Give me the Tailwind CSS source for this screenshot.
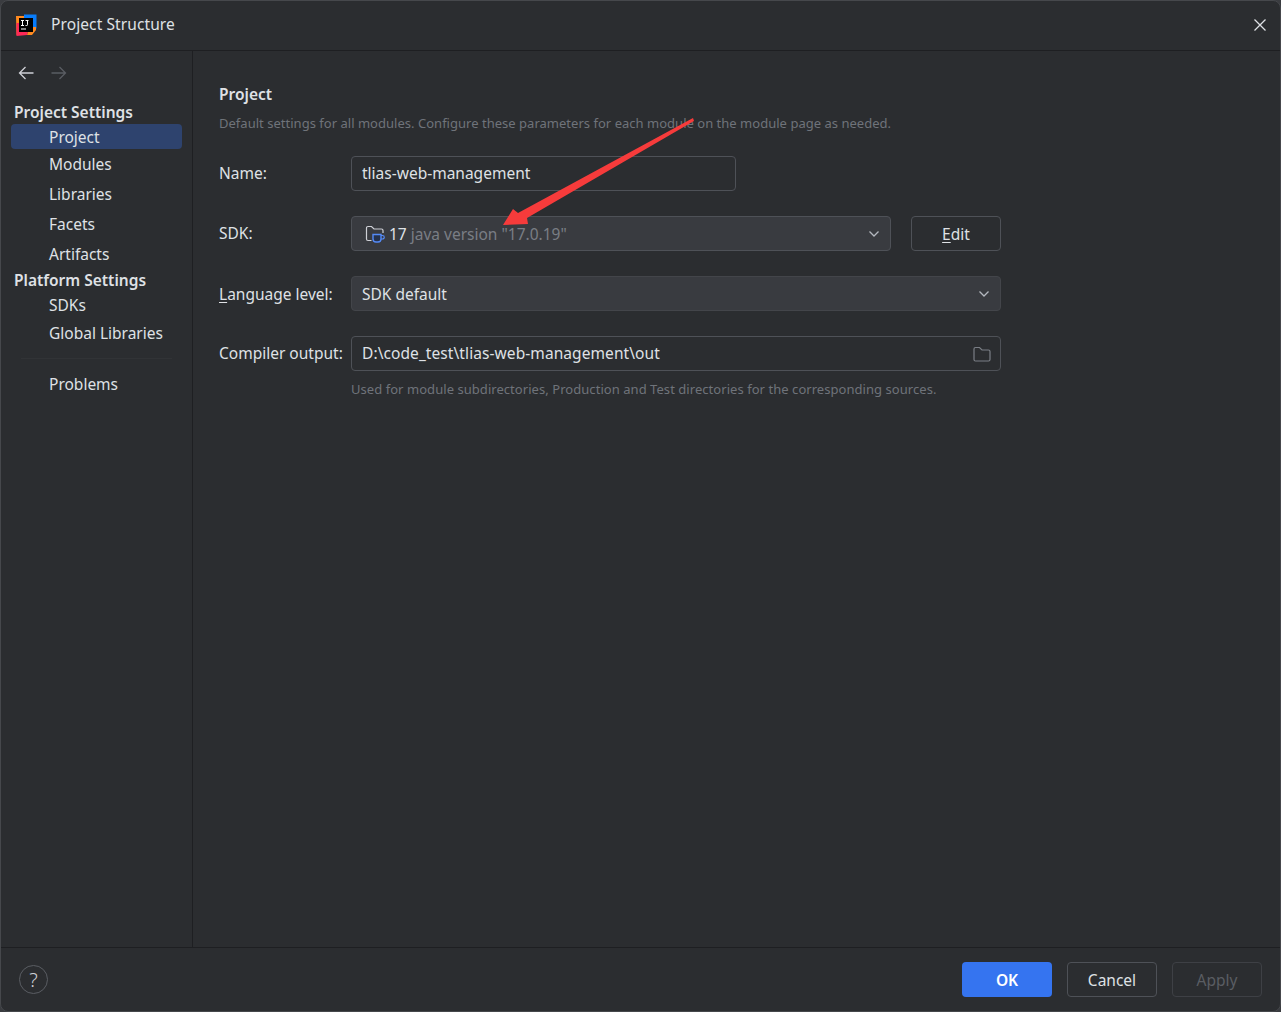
<!DOCTYPE html>
<html lang="en">
<head>
 <meta charset="UTF-8">
 <title>Project Structure</title>
 <script src="https://cdn.jsdelivr.net/npm/@tailwindcss/browser@4"></script>
</head>
<body class="bg-[#3a3c40] font-['Noto_Sans','Open_Sans',sans-serif] text-[15.5px] text-[#dfe1e5] overflow-hidden">
 <div class="relative w-[1281px] h-[1012px] flex flex-col bg-[#2b2d30] rounded-[8px] border border-[#46484c] overflow-hidden">

   <!-- title bar -->
   <div class="h-[50px] shrink-0 flex items-center border-b border-[#1e1f22] pl-[14px] pr-[13px]">
     <svg class="w-[22px] h-[22px] -mt-[2px]" viewBox="0 0 22 22">
       <path d="M1 2h9v5H6v8l-2 5-2.500 1z" fill="#ff8a1f"/>
       <path d="M9 .5h12.500v14l-3.500 1V6H9z" fill="#087cfa"/>
       <path d="M1.500 9h3.500v9h8l-1 3-10.500 1z" fill="#fe2857"/>
       <path d="M17 13h4v3l-4 5h-5l1-3h4z" fill="#ff8a1f"/>
       <rect x="4" y="4" width="14" height="14" fill="#000"/>
       <path d="M6 6.500h3M7.500 6.500v5M6 11.500h3M10.500 6.500h3M12.500 6.500v4.200q0 .8-.8.8h-1.200" stroke="#fff" stroke-width="1" fill="none"/>
       <rect x="6" y="14.500" width="5" height="1" fill="#fff"/>
     </svg>
     <span class="ml-[14px] -mt-[2px] tracking-[.1px] text-[#dfe1e5]">Project Structure</span>
     <svg class="ml-auto w-[14px] h-[14px] -mt-[2px]" viewBox="0 0 14 14"><path d="M1.500 1.500l11 11M12.500 1.500l-11 11" stroke="#dfe1e5" stroke-width="1.300"/></svg>
   </div>

   <div class="flex flex-1 min-h-0">
     <!-- sidebar -->
     <aside class="w-[192px] shrink-0 border-r border-[#1e1f22] pt-[12px]">
       <div class="flex items-center gap-[17px] pl-[17px] h-[20px]">
         <svg class="w-[16px] h-[16px]" viewBox="0 0 16 16"><path d="M15.500 8H1.500M7.500 2l-6 6 6 6" stroke="#ced0d6" stroke-width="1.300" fill="none"/></svg>
         <svg class="w-[16px] h-[16px]" viewBox="0 0 16 16"><path d="M.5 8h14M8.500 2l6 6-6 6" stroke="#5a5d63" stroke-width="1.300" fill="none"/></svg>
       </div>
       <div class="mt-[19px] pl-[13px] pt-[2px] h-[20px] flex items-center font-semibold text-[#dfe1e5]">Project Settings</div>
       <div class="mt-[2px] mx-[10px] w-[171px] h-[25px] rounded-[4px] bg-[#2e436e] pl-[38px] pt-[2px] flex items-center">Project</div>
       <div class="pl-[48px] pt-[2px] mt-[3px] h-[24px] flex items-center">Modules</div>
       <div class="pl-[48px] pt-[2px] mt-[6px] h-[24px] flex items-center">Libraries</div>
       <div class="pl-[48px] pt-[2px] mt-[6px] h-[24px] flex items-center">Facets</div>
       <div class="pl-[48px] pt-[2px] mt-[6px] h-[24px] flex items-center">Artifacts</div>
       <div class="pl-[13px] pt-[2px] mt-[2px] h-[24px] flex items-center font-semibold">Platform Settings</div>
       <div class="pl-[48px] pt-[2px] mt-[1px] h-[24px] flex items-center">SDKs</div>
       <div class="pl-[48px] pt-[2px] mt-[4px] h-[24px] flex items-center">Global Libraries</div>
       <div class="mx-[20px] mt-[13px] h-px bg-[#313336]"></div>
       <div class="pl-[48px] pt-[2px] mt-[13px] h-[24px] flex items-center">Problems</div>
     </aside>

     <!-- content -->
     <main class="flex-1 pl-[26px] pt-[33px]">
       <div class="h-[20px] pt-[2px] flex items-center font-semibold">Project</div>
       <div class="mt-[10px] h-[20px] flex items-center text-[13px] tracking-[.02px] text-[#6f737a]">Default settings for all modules. Configure these parameters for each module on the module page as needed.</div>

       <div class="mt-[22px] flex items-center h-[35px]">
         <label class="w-[132px] shrink-0">Name:</label>
         <div class="w-[385px] h-[35px] rounded-[4px] border border-[#4e5157] px-[10px] flex items-center">tlias-web-management</div>
       </div>

       <div class="mt-[25px] flex items-center h-[35px]">
         <label class="w-[132px] shrink-0">SDK:</label>
         <div class="w-[540px] h-[35px] rounded-[4px] border border-[#4e5157] bg-[#393b40] pl-[13px] pr-[10px] flex items-center">
           <svg class="w-[20px] h-[20px] shrink-0" viewBox="0 0 20 20" fill="none">
             <path d="M6.500 16.500H3a1.500 1.500 0 0 1-1.500-1.500V4A1.500 1.500 0 0 1 3 2.500h3.500L9 5h7.500A1.500 1.500 0 0 1 18 6.500V9" stroke="#ced0d6" stroke-width="1.200"/>
             <path d="M8 10.500h8v4.500a3 3 0 0 1-3 3h-2a3 3 0 0 1-3-3z" fill="#25324d" stroke="#548af7" stroke-width="1.400"/>
             <path d="M16 11.500h1.500a1.500 1.500 0 0 1 0 3.500H16" stroke="#548af7" stroke-width="1.200"/>
           </svg>
           <span class="ml-[4px] mt-[2px]">17</span>
           <span class="ml-[4px] mt-[2px] text-[#7a7e85]">java version "17.0.19"</span>
           <svg class="ml-auto w-[12px] h-[12px]" viewBox="0 0 12 12" fill="none"><path d="M1.500 3.500L6 8l4.500-4.500" stroke="#b4b8bf" stroke-width="1.300"/></svg>
         </div>
         <button class="ml-[20px] w-[90px] h-[35px] pt-[2px] rounded-[4px] border border-[#4e5157] flex items-center justify-center"><span><span class="underline underline-offset-2">E</span>dit</span></button>
       </div>

       <div class="mt-[25px] flex items-center h-[35px]">
         <label class="w-[132px] pt-[2px] shrink-0"><span class="underline underline-offset-2">L</span>anguage level:</label>
         <div class="w-[650px] h-[35px] rounded-[4px] border border-[#43454a] bg-[#393b40] pl-[10px] pr-[10px] flex items-center">
           <span class="mt-[2px]">SDK default</span>
           <svg class="ml-auto w-[12px] h-[12px]" viewBox="0 0 12 12" fill="none"><path d="M1.500 3.500L6 8l4.500-4.500" stroke="#b4b8bf" stroke-width="1.300"/></svg>
         </div>
       </div>

       <div class="mt-[25px] flex items-center h-[35px]">
         <label class="w-[132px] shrink-0">Compiler output:</label>
         <div class="w-[650px] h-[35px] rounded-[4px] border border-[#4e5157] pl-[10px] pr-[9px] flex items-center">
           <span class="tracking-[.08px]">D:\code_test\tlias-web-management\out</span>
           <svg class="ml-auto w-[18px] h-[16px]" viewBox="0 0 18 16" fill="none"><path d="M1 3a1.500 1.500 0 0 1 1.500-1.500h4L9 4h6.500A1.500 1.500 0 0 1 17 5.500v8a1.500 1.500 0 0 1-1.500 1.500h-13A1.500 1.500 0 0 1 1 13.500z" stroke="#7a7e85" stroke-width="1.200"/></svg>
         </div>
       </div>

       <div class="mt-[9px] ml-[132px] h-[20px] flex items-center text-[13px] tracking-[.05px] text-[#6f737a]">Used for module subdirectories, Production and Test directories for the corresponding sources.</div>
     </main>
   </div>

   <!-- footer -->
   <div class="h-[64px] shrink-0 border-t border-[#1e1f22] flex items-center pl-[18px] pr-[18px]">
     <button class="w-[29px] h-[29px] rounded-full border border-[#5a5d63] flex items-center justify-center text-[#ced0d6] text-[20px] font-light">?</button>
     <button class="ml-auto w-[90px] h-[35px] pt-[2px] rounded-[4px] bg-[#3574f0] text-white font-semibold">OK</button>
     <button class="ml-[15px] w-[90px] h-[35px] pt-[2px] rounded-[4px] border border-[#4e5157]">Cancel</button>
     <button class="ml-[15px] w-[90px] h-[35px] pt-[2px] rounded-[4px] border border-[#3e4045] text-[#5a5d63]">Apply</button>
   </div>

   <!-- red annotation arrow -->
   <svg class="absolute left-[-1px] top-[-1px] pointer-events-none" width="1281" height="1012" viewBox="0 0 1281 1012">
     <path d="M693 118L694 121 527 218 528 224 503 225 513 209 518 213z" fill="#f63b3b"/>
   </svg>
 </div>
</body>
</html>
